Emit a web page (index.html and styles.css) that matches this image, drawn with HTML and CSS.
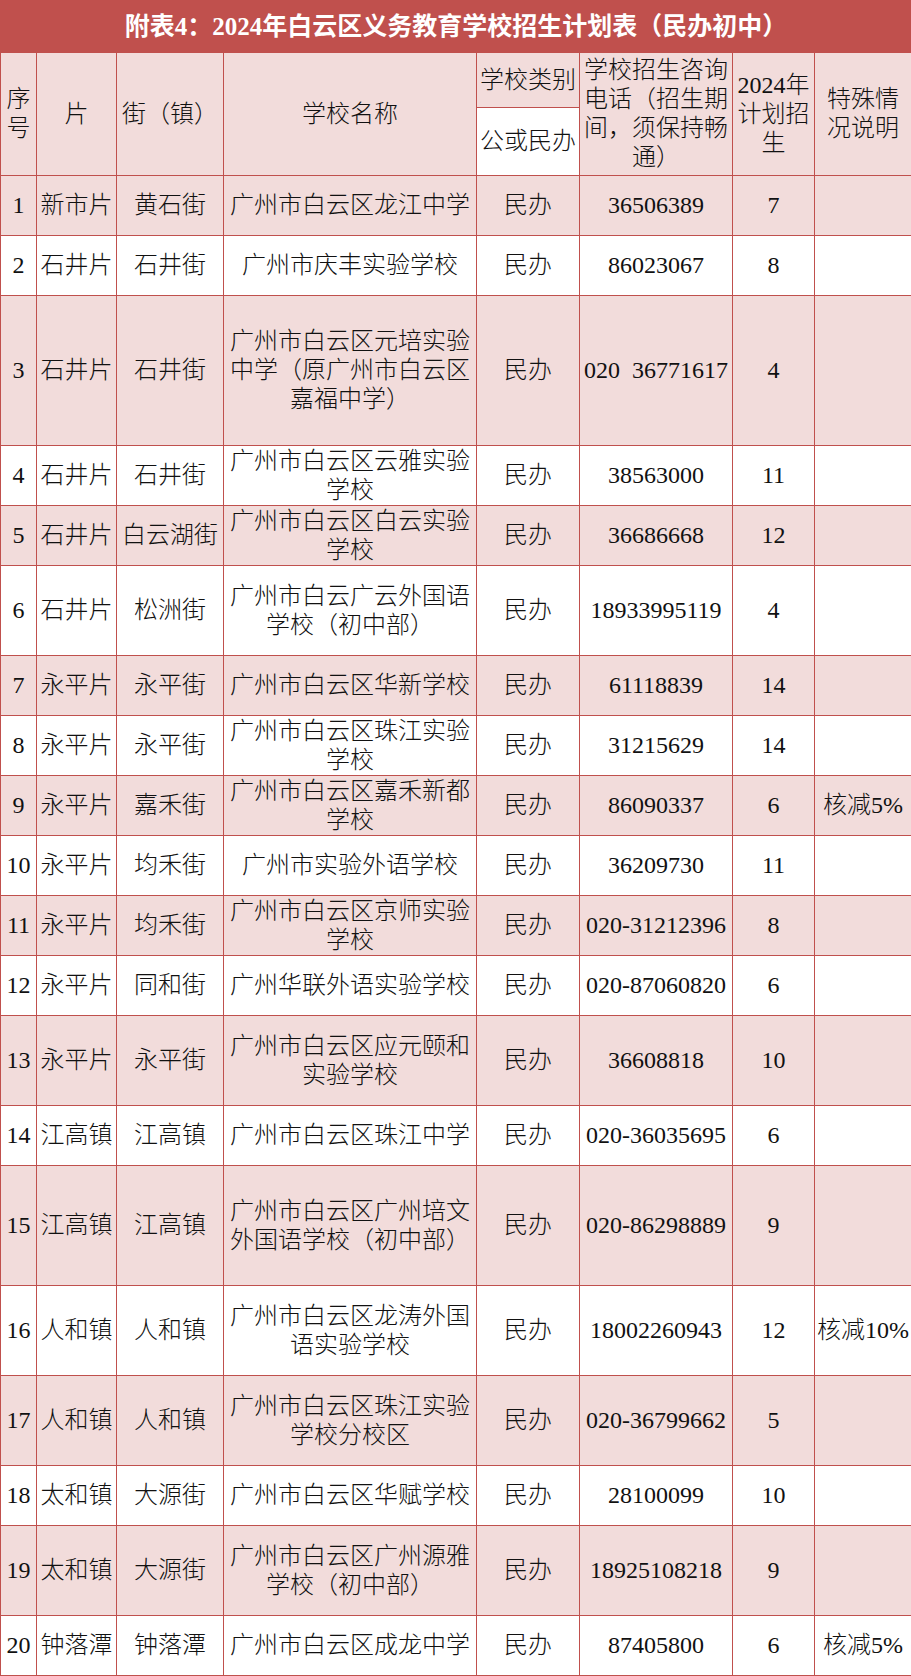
FILE: index.html
```html
<!DOCTYPE html>
<html lang="zh-CN">
<head>
<meta charset="utf-8">
<title>附表4：2024年白云区义务教育学校招生计划表（民办初中）</title>
<link rel="stylesheet" href="styles.css">
</head>
<body>
<table class="sheet">
  <colgroup>
    <col class="c-no">
    <col class="c-area">
    <col class="c-street">
    <col class="c-name">
    <col class="c-type">
    <col class="c-phone">
    <col class="c-plan">
    <col class="c-note">
  </colgroup>
  <thead>
    <tr class="r-title">
      <th class="title" colspan="8">附表4：2024年白云区义务教育学校招生计划表（民办初中）</th>
    </tr>
    <tr class="r-head1 pink">
      <th rowspan="2" class="narrow">序号</th>
      <th rowspan="2">片</th>
      <th rowspan="2">街（镇）</th>
      <th rowspan="2">学校名称</th>
      <th>学校类别</th>
      <th rowspan="2">学校招生咨询电话（招生期间，须保持畅通）</th>
      <th rowspan="2">2024年计划招生</th>
      <th rowspan="2">特殊情况说明</th>
    </tr>
    <tr class="r-head2">
      <th class="white">公或民办</th>
    </tr>
  </thead>
  <tbody>
    <tr class="h60 pink"><td>1</td><td>新市片</td><td>黄石街</td><td>广州市白云区龙江中学</td><td>民办</td><td>36506389</td><td>7</td><td></td></tr>
    <tr class="h60"><td>2</td><td>石井片</td><td>石井街</td><td>广州市庆丰实验学校</td><td>民办</td><td>86023067</td><td>8</td><td></td></tr>
    <tr class="h150 pink"><td>3</td><td>石井片</td><td>石井街</td><td>广州市白云区元培实验中学（原广州市白云区嘉福中学）</td><td>民办</td><td>020&nbsp;&nbsp;36771617</td><td>4</td><td></td></tr>
    <tr class="h60"><td>4</td><td>石井片</td><td>石井街</td><td>广州市白云区云雅实验学校</td><td>民办</td><td>38563000</td><td>11</td><td></td></tr>
    <tr class="h60 pink"><td>5</td><td>石井片</td><td>白云湖街</td><td>广州市白云区白云实验学校</td><td>民办</td><td>36686668</td><td>12</td><td></td></tr>
    <tr class="h90"><td>6</td><td>石井片</td><td>松洲街</td><td>广州市白云广云外国语学校（初中部）</td><td>民办</td><td>18933995119</td><td>4</td><td></td></tr>
    <tr class="h60 pink"><td>7</td><td>永平片</td><td>永平街</td><td>广州市白云区华新学校</td><td>民办</td><td>61118839</td><td>14</td><td></td></tr>
    <tr class="h60"><td>8</td><td>永平片</td><td>永平街</td><td>广州市白云区珠江实验学校</td><td>民办</td><td>31215629</td><td>14</td><td></td></tr>
    <tr class="h60 pink"><td>9</td><td>永平片</td><td>嘉禾街</td><td>广州市白云区嘉禾新都学校</td><td>民办</td><td>86090337</td><td>6</td><td>核减5%</td></tr>
    <tr class="h60"><td>10</td><td>永平片</td><td>均禾街</td><td>广州市实验外语学校</td><td>民办</td><td>36209730</td><td>11</td><td></td></tr>
    <tr class="h60 pink"><td>11</td><td>永平片</td><td>均禾街</td><td>广州市白云区京师实验学校</td><td>民办</td><td>020-31212396</td><td>8</td><td></td></tr>
    <tr class="h60"><td>12</td><td>永平片</td><td>同和街</td><td>广州华联外语实验学校</td><td>民办</td><td>020-87060820</td><td>6</td><td></td></tr>
    <tr class="h90 pink"><td>13</td><td>永平片</td><td>永平街</td><td>广州市白云区应元颐和实验学校</td><td>民办</td><td>36608818</td><td>10</td><td></td></tr>
    <tr class="h60"><td>14</td><td>江高镇</td><td>江高镇</td><td>广州市白云区珠江中学</td><td>民办</td><td>020-36035695</td><td>6</td><td></td></tr>
    <tr class="h120 pink"><td>15</td><td>江高镇</td><td>江高镇</td><td>广州市白云区广州培文外国语学校（初中部）</td><td>民办</td><td>020-86298889</td><td>9</td><td></td></tr>
    <tr class="h90"><td>16</td><td>人和镇</td><td>人和镇</td><td>广州市白云区龙涛外国语实验学校</td><td>民办</td><td>18002260943</td><td>12</td><td>核减10%</td></tr>
    <tr class="h90 pink"><td>17</td><td>人和镇</td><td>人和镇</td><td>广州市白云区珠江实验学校分校区</td><td>民办</td><td>020-36799662</td><td>5</td><td></td></tr>
    <tr class="h60"><td>18</td><td>太和镇</td><td>大源街</td><td>广州市白云区华赋学校</td><td>民办</td><td>28100099</td><td>10</td><td></td></tr>
    <tr class="h90 pink"><td>19</td><td>太和镇</td><td>大源街</td><td>广州市白云区广州源雅学校（初中部）</td><td>民办</td><td>18925108218</td><td>9</td><td></td></tr>
    <tr class="h60"><td>20</td><td>钟落潭</td><td>钟落潭</td><td>广州市白云区成龙中学</td><td>民办</td><td>87405800</td><td>6</td><td>核减5%</td></tr>
  </tbody>
</table>
</body>
</html>
```
FILE: styles.css
```css
html, body {
  margin: 0;
  padding: 0;
  background: #ffffff;
}

.sheet {
  width: 911px;
  border-collapse: collapse;
  table-layout: fixed;
  font-family: "Liberation Serif", "Noto Sans CJK SC", serif;
  font-size: 24px;
  line-height: 29px;
  color: #111111;
  font-weight: 300;
}

.c-no { width: 36px; }
.c-area { width: 80px; }
.c-street { width: 107px; }
.c-name { width: 253px; }
.c-type { width: 103px; }
.c-phone { width: 153px; }
.c-plan { width: 82px; }
.c-note { width: 97px; }

.sheet th,
.sheet td {
  border: 1px solid #c0504d;
  padding: 0 1px;
  text-align: center;
  vertical-align: middle;
  font-weight: 300;
  overflow: hidden;
  word-break: break-all;
}

.sheet .title {
  background: #c0504d;
  color: #ffffff;
  font-weight: 700;
  font-size: 25px;
  padding: 0;
}

.r-title { height: 52px; }
.r-head1 { height: 55px; }
.r-head2 { height: 68px; }

.pink th,
.pink td {
  background: #f2dcdb;
}

.sheet .white {
  background: #ffffff;
}

.h60 { height: 60px; }
.h90 { height: 90px; }
.h120 { height: 120px; }
.h150 { height: 150px; }
```
